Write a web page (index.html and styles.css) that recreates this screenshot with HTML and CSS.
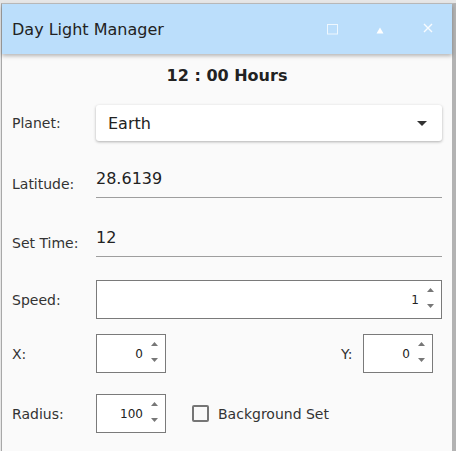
FILE: index.html
```html
<!DOCTYPE html>
<html>
<head>
<meta charset="utf-8">
<link rel="stylesheet" href="styles.css">
</head>
<body>
<div class="window">
  <div class="titlebar">
    <span class="title">Day Light Manager</span>
    <span class="tb-icons">
      <svg class="tb-icon" width="12" height="11" viewBox="0 0 12 11"><rect x="0.5" y="0.5" width="10" height="9.5" fill="none" stroke="rgba(255,255,255,0.75)" stroke-width="1"/></svg>
      <svg class="tb-icon" width="8" height="7" viewBox="0 0 8 7"><polygon points="4,0.5 7.5,6.5 0.5,6.5" fill="#ffffff"/></svg>
      <svg class="tb-icon" width="10" height="10" viewBox="0 0 10 10"><path d="M1 1 L9 9 M9 1 L1 9" stroke="rgba(255,255,255,0.9)" stroke-width="1.4"/></svg>
    </span>
  </div>
  <div class="content">
    <div class="heading">12 : 00 Hours</div>

    <div class="row row-planet">
      <span class="label">Planet:</span>
      <div class="select">
        <span>Earth</span>
        <svg width="10" height="5" viewBox="0 0 10 5"><polygon points="0,0 10,0 5,5" fill="#333"/></svg>
      </div>
    </div>

    <div class="row row-text row-lat">
      <span class="label">Latitude:</span>
      <div class="field">28.6139</div>
    </div>

    <div class="row row-text row-time">
      <span class="label">Set Time:</span>
      <div class="field">12</div>
    </div>

    <div class="row row-speed">
      <span class="label">Speed:</span>
      <div class="spin spin-wide">
        <span class="num">1</span>
        <span class="arrows">
          <svg width="7" height="4" viewBox="0 0 7 4"><polygon points="3.5,0 7,4 0,4" fill="#777"/></svg>
          <svg width="7" height="4" viewBox="0 0 7 4"><polygon points="0,0 7,0 3.5,4" fill="#777"/></svg>
        </span>
      </div>
    </div>

    <div class="row row-xy">
      <span class="label">X:</span>
      <div class="spin spin-small">
        <span class="num">0</span>
        <span class="arrows">
          <svg width="7" height="4" viewBox="0 0 7 4"><polygon points="3.5,0 7,4 0,4" fill="#777"/></svg>
          <svg width="7" height="4" viewBox="0 0 7 4"><polygon points="0,0 7,0 3.5,4" fill="#777"/></svg>
        </span>
      </div>
      <span class="spacer"></span>
      <span class="label label-y">Y:</span>
      <div class="spin spin-small spin-y">
        <span class="num">0</span>
        <span class="arrows">
          <svg width="7" height="4" viewBox="0 0 7 4"><polygon points="3.5,0 7,4 0,4" fill="#777"/></svg>
          <svg width="7" height="4" viewBox="0 0 7 4"><polygon points="0,0 7,0 3.5,4" fill="#777"/></svg>
        </span>
      </div>
    </div>

    <div class="row row-radius">
      <span class="label">Radius:</span>
      <div class="spin spin-small">
        <span class="num">100</span>
        <span class="arrows">
          <svg width="7" height="4" viewBox="0 0 7 4"><polygon points="3.5,0 7,4 0,4" fill="#777"/></svg>
          <svg width="7" height="4" viewBox="0 0 7 4"><polygon points="0,0 7,0 3.5,4" fill="#777"/></svg>
        </span>
      </div>
      <span class="checkbox"></span>
      <span class="check-label">Background Set</span>
    </div>
  </div>
</div>
</body>
</html>
```

FILE: styles.css
```css
html, body {
  margin: 0;
  padding: 0;
}
body {
  background: #e6e6e6;
  font-family: "DejaVu Sans", Verdana, sans-serif;
  color: #333;
  width: 456px;
  height: 451px;
  overflow: hidden;
}
.window {
  margin: 3px 0 0 1px;
  width: 450px;
  height: 460px;
  background: #fafafa;
  border-left: 1px solid #a8a8a8;
  border-top: 1px solid #bdbdbd;
  border-right: 4px solid #b3b3b3;
}
.titlebar {
  height: 50px;
  background: #bbdefb;
  box-shadow: 0 2px 4px rgba(0, 0, 0, 0.28);
  display: flex;
  align-items: center;
  padding-left: 10px;
  position: relative;
}
.title {
  font-size: 16px;
  color: #222;
  flex: 1;
}
.tb-icons {
  display: flex;
  align-items: center;
}
.tb-icon:nth-child(1) {
  margin-right: 37px;
  margin-top: 1px;
}
.tb-icon:nth-child(2) {
  margin-right: 39px;
  margin-top: 2px;
}
.tb-icon:nth-child(3) {
  margin-right: 19px;
  margin-top: -2px;
}
.content {
  padding: 0 10px;
}
.heading {
  padding-top: 12px;
  font-size: 16px;
  font-weight: bold;
  line-height: 20px;
  text-align: center;
  color: #222;
}
.row {
  display: flex;
  align-items: center;
}
.label {
  width: 84px;
  flex: none;
  font-size: 14px;
  line-height: 16px;
  color: #333;
}
.row-planet {
  margin-top: 19px;
  height: 36px;
}
.select {
  flex: 1;
  height: 36px;
  box-sizing: border-box;
  background: #fff;
  border-radius: 3px;
  box-shadow: 0 1px 3px rgba(0, 0, 0, 0.3);
  display: flex;
  align-items: center;
  justify-content: space-between;
  padding: 0 15px 0 12px;
  font-size: 16px;
  color: #222;
}
.row-text {
  align-items: flex-end;
}
.row-text .label {
  margin-bottom: 6px;
}
.field {
  flex: 1;
  height: 32px;
  box-sizing: border-box;
  padding-top: 3px;
  border-bottom: 1px solid #9e9e9e;
  font-size: 16px;
  line-height: 20px;
  color: #222;
}
.row-lat {
  margin-top: 25px;
}
.row-time {
  margin-top: 27px;
}
.row-speed {
  margin-top: 23px;
}
.row-xy {
  margin-top: 15px;
}
.row-radius {
  margin-top: 21px;
}
.spin {
  height: 39px;
  box-sizing: border-box;
  background: #fff;
  border: 1px solid #7a7a7a;
  display: flex;
  align-items: center;
  justify-content: flex-end;
  padding-right: 7px;
}
.spin-wide {
  flex: 1;
}
.spin-small {
  width: 70px;
  flex: none;
}
.num {
  font-size: 12px;
  color: #222;
  margin-right: 8px;
}
.arrows {
  display: flex;
  flex-direction: column;
  justify-content: space-between;
  height: 20px;
  margin-top: -3px;
}
.arrows svg {
  display: block;
}
.spacer {
  flex: 1;
}
.label-y {
  width: 22px;
}
.spin-y {
  margin-right: 9px;
}
.checkbox {
  width: 17px;
  height: 17px;
  box-sizing: border-box;
  border: 2px solid #757575;
  border-radius: 2px;
  margin-left: 26px;
  flex: none;
}
.check-label {
  font-size: 14px;
  color: #333;
  margin-left: 9px;
}
```
